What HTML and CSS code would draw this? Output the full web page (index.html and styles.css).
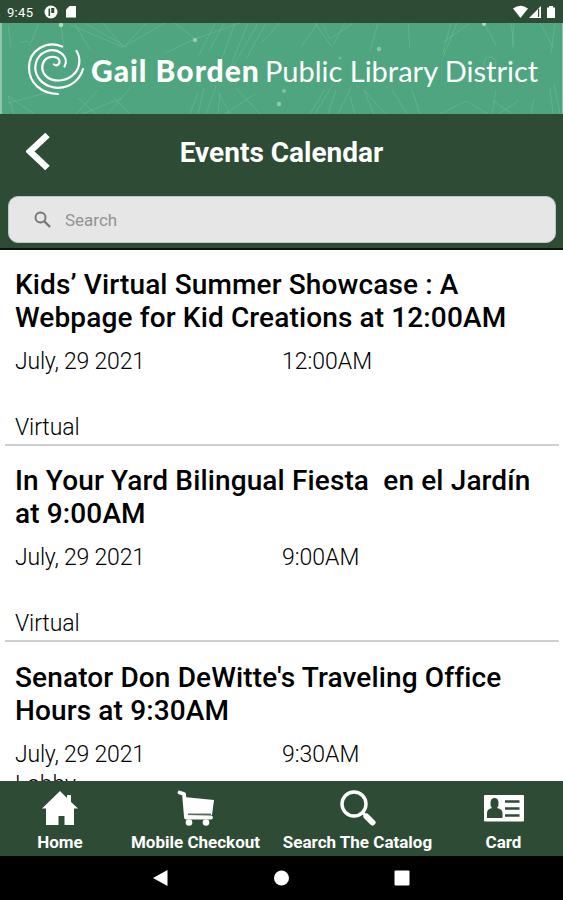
FILE: index.html
```html
<!DOCTYPE html>
<html lang="en">
<head>
    <meta charset="UTF-8">
    <meta name="viewport" content="width=device-width, initial-scale=1.0">
    <title>Events Calendar</title>
    <link rel="stylesheet" href="styles.css">
</head>
<body>
    <div class="status-bar">
        <span class="clock">9:45</span>
        <svg class="status-left" width="34" height="14" viewBox="0 0 34 14">
            <circle cx="7" cy="7" r="6.500" fill="#fff"/>
            <path d="M5.300 3.500V11M8 3.800h1.500v3.400H8z" fill="none" stroke="#2e4b36" stroke-width="1.600"/>
            <path d="M25.500 1H32v11.500H22V4.500z" fill="#fff"/>
        </svg>
        <svg class="status-right" width="44" height="14" viewBox="0 0 44 14">
            <path d="M0 3.500Q7.500-2 15 3.500L7.500 13z" fill="#fff"/>
            <path d="M16 13L28 1v12z" fill="#fff"/>
            <path d="M25.600 4v8" stroke="#2e4b36" stroke-width="1.200"/>
            <path d="M34 2.500h2V1h4v1.500h2V13h-8z" fill="#fff"/>
        </svg>
    </div>

    <!-- Library banner -->
    <div class="banner">
        <svg class="banner-lines" width="563" height="91" viewBox="0 0 563 91">
            <g fill="none" stroke="#a9e0b8" stroke-opacity=".22" stroke-width="1">
                <path d="M8 2l3 22M38 2l-7 18M61 1l3 26M75 1l15 26M70 2l53 22 42-24M84 0l43 24M123 24L103 0M146 0l-20 22M195 16L175 0M195 16L240 0M195 16l-30 14M215 0l-17 34M224 0l-15 28M235 0l-14 38M248 0l-20 50M258 0l-24 42M266 0l-20 36M280 0l-19 20M318 0l-17 24M315 0l17 24M322 0l8 16 23-16M345 0l-12 22M378 0l-8 28M408 0l2 26M457 0l-14 34M451 0l-8 30M470 0l-28 20M484 0l12 22M511 0l3 24M514 0l-2 26M540 0l14 26M555 0l-4 30M8 73l26 18M8 80l38-10M14 91l-6-18M76 91l22-24M96 91l-18-16M82 91l40-16M108 91l22-26M130 91l-16-16M190 91l8-22M198 91l6-26M206 91l10-28M218 91l2-20M230 91l-12-22M225 91l30-20M260 91l-24-26M310 91l15-25M315 91l18-30M328 91l8-24M338 91l14-28M355 91l-5-18M374 91l-10-24M385 91l-20-23M407 91l-15-24M420 91l-8-24M440 91l26-13M466 78l22 13M492 91l4-24M499 91l20-14M512 91l-20-14M531 91l3-16M553 91l-3-26M560 91l-6-30"/>
                <circle cx="490" cy="40" r="6"/>
                <path d="M20 20q8-5 11 3"/>
            </g>
            <g fill="#a9e0b8">
                <circle cx="61" cy="2" r="2.200"/>
                <circle cx="195" cy="17" r="2.200" opacity=".7"/>
                <circle cx="279" cy="81" r="2.200" opacity=".7"/>
                <circle cx="284" cy="68" r="2" opacity=".5"/>
                <circle cx="379" cy="26" r="2.300" opacity=".6"/>
                <circle cx="340" cy="35" r="1.500" opacity=".4"/>
                <circle cx="484" cy="1" r="2"/>
            </g>
        </svg>
        <svg class="swirl" width="58" height="54" viewBox="27 43 58 54">
            <g fill="none" stroke="#fff" stroke-width="2.200" stroke-linecap="round">
                <path d="M62 47.500C47 41 29 51 29 68.500C29 84 41 94.500 58 95"/>
                <path d="M64.500 67.500C70 57 57 48 46 52.500C35 57 32.500 70 38.500 79C50 95 77 91 83 70"/>
                <path d="M54 65.500C56.500 67.500 60 65.500 59.500 62C58.500 57 49 56 44.500 61.500C40.500 67 42 74 47 78C55 84 68 82 75 74C80 68 81 59 76.500 52"/>
            </g>
        </svg>
        <span class="brand-bold">Gail Borden</span>
        <span class="brand-light">Public Library District</span>
    </div>

    <div class="header">
        <div class="title-row">
            <svg class="back" width="26" height="40" viewBox="0 0 26 40">
                <path d="M21.500 3L4 19.500L21.500 36" fill="none" stroke="#fff" stroke-width="6.500"/>
            </svg>
            <h1>Events Calendar</h1>
        </div>
        <div class="search-box">
            <svg width="18" height="18" viewBox="0 0 18 18">
                <circle cx="6.500" cy="6.500" r="5" fill="none" stroke="#757575" stroke-width="1.900"/>
                <path d="M10.500 10.500L16 16" stroke="#757575" stroke-width="2.400"/>
            </svg>
            <span>Search</span>
        </div>
    </div>

    <!-- Event list -->
    <div class="events">
        <div class="event">
            <h2>Kids’ Virtual Summer Showcase : A<br>Webpage for Kid Creations at 12:00AM</h2>
            <div class="when"><span class="date">July, 29 2021</span><span>12:00AM</span></div>
            <p class="place">Virtual</p>
        </div>
        <div class="event">
            <h2>In Your Yard Bilingual Fiesta&nbsp; en el Jardín<br>at 9:00AM</h2>
            <div class="when"><span class="date">July, 29 2021</span><span>9:00AM</span></div>
            <p class="place">Virtual</p>
        </div>
        <div class="event last">
            <h2>Senator Don DeWitte's Traveling Office<br>Hours at 9:30AM</h2>
            <div class="when"><span class="date">July, 29 2021</span><span>9:30AM</span></div>
            <p class="place">Lobby</p>
        </div>
    </div>

    <div class="tabs">
        <div class="tab home">
            <svg width="36" height="36" viewBox="0 0 36 36">
                <path d="M18 1L25 8V5h4v7l7 6.500h-4V35h-9.500v-9h-6v9H4V18.500H0z" fill="#fff"/>
            </svg>
            <span>Home</span>
        </div>
        <div class="tab checkout">
            <svg width="38" height="36" viewBox="0 0 38 36">
                <path d="M7 7L37 10L35 25L9 26z" fill="#fff"/>
                <path d="M2.500 2.500L7 4L9 27.500H34" fill="none" stroke="#fff" stroke-width="3.800" stroke-linecap="round" stroke-linejoin="round"/>
                <path d="M11 24.200H34" stroke="#2e4b36" stroke-width="1.200"/>
                <circle cx="12" cy="32.500" r="3.300" fill="#fff"/>
                <circle cx="29" cy="32.500" r="3.300" fill="#fff"/>
            </svg>
            <span>Mobile Checkout</span>
        </div>
        <div class="tab catalog">
            <svg width="36" height="36" viewBox="0 0 36 36">
                <circle cx="14" cy="14" r="12" fill="none" stroke="#fff" stroke-width="3.400"/>
                <path d="M22.500 22.500L26 26" stroke="#fff" stroke-width="3"/>
                <path d="M26.500 26.500L32.500 32.500" stroke="#fff" stroke-width="6" stroke-linecap="round"/>
            </svg>
            <span>Search The Catalog</span>
        </div>
        <div class="tab card">
            <svg width="40" height="36" viewBox="0 0 40 36">
                <rect y="5" width="40" height="26.500" rx="1" fill="#fff"/>
                <path d="M3 28V23q0-4 5-5q-2-2-1.500-6Q7 8 10.500 8T14.500 12q.500 4-1.500 6q5.500 1 5.500 5v5z" fill="#2e4b36"/>
                <path d="M21 11.500H35.500M21 18.500H35.500M21 25.500H35.500" stroke="#2e4b36" stroke-width="2.500"/>
            </svg>
            <span>Card</span>
        </div>
    </div>

    <!-- Android navigation -->
    <div class="nav-bar">
        <svg width="563" height="44" viewBox="0 0 563 44">
            <path d="M153 22L167.500 14V30z" fill="#fff"/>
            <circle cx="281.500" cy="22" r="7.500" fill="#fff"/>
            <rect x="394.500" y="14.500" width="15" height="15" rx="1" fill="#fff"/>
        </svg>
    </div>
</body>
</html>
```
FILE: styles.css
```css
body {
    margin: 0;
    height: 900px;
    display: flex;
    flex-direction: column;
    overflow: hidden;
    background: white;
    font-family: Roboto, sans-serif;
    color: black;
}
.status-bar {
    height: 23px;
    flex: none;
    display: flex;
    align-items: center;
    padding: 1px 6px 0 7px;
    box-sizing: border-box;
    background-color: #2e4b36;
    color: white;
}
.clock {
    width: 37px;
    font-size: 13px;
    letter-spacing: 0.3px;
}
.status-right {
    margin-left: auto;
}
.banner {
    position: relative;
    height: 91px;
    flex: none;
    display: flex;
    align-items: center;
    padding-left: 25px;
    box-sizing: border-box;
    border-left: 2px solid #8fc5a9;
    border-right: 1px solid #8fc5a9;
    background-color: #4ea580;
    color: white;
    white-space: nowrap;
}
/* faint network lines behind the logo */
.banner-lines {
    position: absolute;
    left: -2px;
    top: 0;
}
.swirl {
    position: relative;
    margin-right: 6px;
}
.brand-bold {
    position: relative;
    width: 174px;
    font-family: Lato, sans-serif;
    font-weight: 900;
    font-size: 30px;
    letter-spacing: 1px;
    padding-top: 3px;
}
.brand-light {
    position: relative;
    font-family: Lato, sans-serif;
    font-weight: 400;
    font-size: 29px;
    padding-top: 3px;
}
.header {
    height: 136px;
    flex: none;
    box-sizing: border-box;
    border-bottom: 2px solid #0a140c;
    background-color: #2e4b36;
}
.title-row {
    height: 82px;
    display: grid;
    grid-template-columns: 60px 1fr 60px;
    align-items: center;
    box-sizing: border-box;
    padding-bottom: 6px;
    color: white;
}
.back {
    margin-left: 26px;
}
h1 {
    margin: 0;
    text-align: center;
    font-size: 28px;
    font-weight: 700;
}
.search-box {
    height: 47px;
    margin: 0 7px 0 8px;
    padding-left: 25px;
    display: flex;
    align-items: center;
    gap: 13px;
    box-sizing: border-box;
    border: 1px solid #b5cbd3;
    border-radius: 10px;
    background-color: #e6e6e6;
    color: #929292;
    font-size: 17px;
}
.events {
    flex: 1;
    min-height: 0;
    overflow: hidden;
}
.event {
    height: 196.300px;
    padding: 18px 4px 0 5px;
    box-sizing: border-box;
}
h2 {
    margin: 0 10px;
    font-size: 28px;
    line-height: 33px;
    font-weight: 500;
    letter-spacing: 0.13px;
    white-space: nowrap;
}
.when {
    display: grid;
    grid-template-columns: 267px 1fr;
    margin: 13px 10px 0;
    font-size: 23px;
    line-height: 30px;
    font-weight: 300;
}
.date {
    letter-spacing: -0.2px;
}
.place {
    margin: 36px 0 0;
    padding: 0 10px 1px;
    font-size: 23px;
    line-height: 30px;
    font-weight: 300;
    letter-spacing: -0.1px;
    border-bottom: 2px solid #cfcfcf;
}
.last .place {
    margin-top: 0;
    border: none;
}
.tabs {
    height: 75px;
    flex: none;
    display: grid;
    grid-template-columns: 120px 151px 173px 119px;
    background-color: #2e4b36;
    color: white;
}
.tab {
    display: flex;
    flex-direction: column;
    align-items: center;
    padding-top: 9px;
    font-size: 17px;
    font-weight: 700;
    white-space: nowrap;
}
.tab span {
    line-height: 20px;
    margin-top: 6px;
}
.nav-bar {
    height: 44px;
    flex: none;
    background-color: black;
}
```
